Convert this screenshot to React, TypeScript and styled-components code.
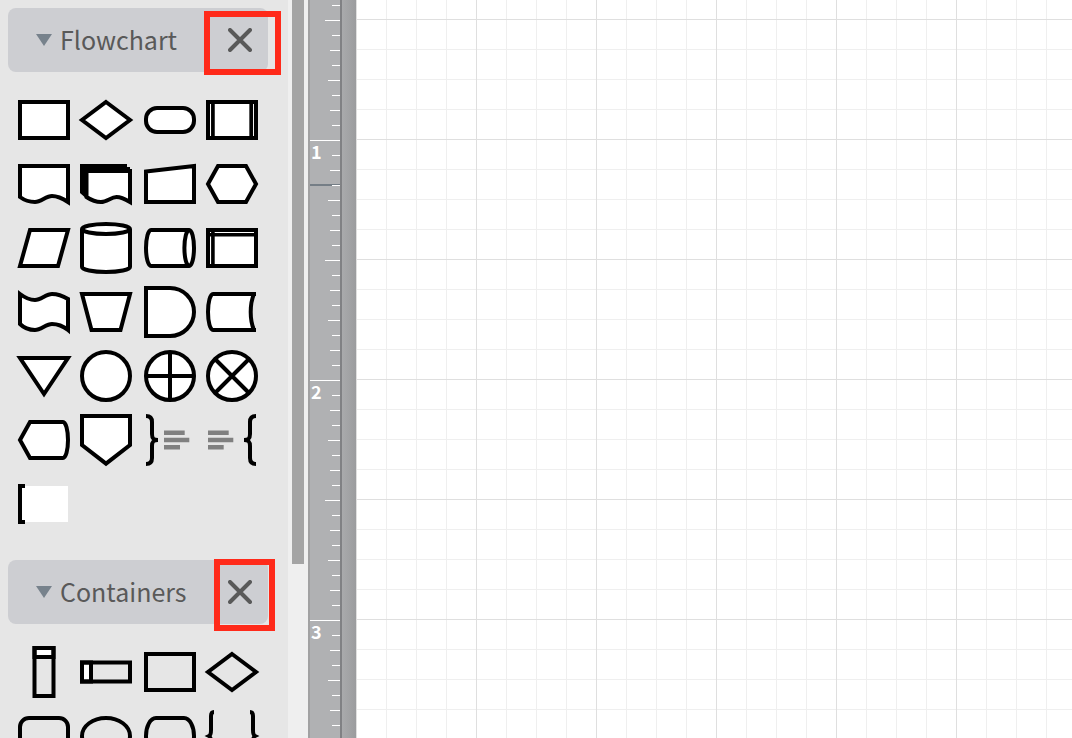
import React, { useEffect, useState } from "react";
import styled, { createGlobalStyle } from "styled-components";

const GlobalStyle = createGlobalStyle`
  *, *::before, *::after { box-sizing: border-box; }
  body {
    margin: 0;
    font-family: "Noto Sans CJK SC", "Noto Sans", sans-serif;
    color: #595959;
  }
  button {
    border: 0;
    padding: 0;
    background: none;
    font: inherit;
    color: inherit;
    cursor: pointer;
  }
`;

const Editor = styled.div`
  display: flex;
  height: 100vh;
  overflow: hidden;
`;

const Sidebar = styled.aside`
  flex: none;
  width: 288px;
  padding: 8px;
  background: #e6e6e6;
  overflow: hidden;
`;

const ScrollTrack = styled.div`
  flex: none;
  width: 20px;
  padding: 0 4px;
  background: #efefef;
`;

const ScrollThumb = styled.div`
  height: 564px;
  max-height: 100%;
  background: #a4a4a4;
`;

const Library = styled.section`
  margin-bottom: 24px;
`;

const LibraryHeader = styled.header`
  position: relative;
  display: flex;
  align-items: center;
  justify-content: space-between;
  width: 260px;
  height: 64px;
  padding: 0 16px 0 28px;
  border-radius: 8px;
  background: #cdced2;
`;

const LibraryToggle = styled.button`
  display: flex;
  align-items: center;
  gap: 8px;
  font-size: 25px;
  line-height: 32px;
`;

const LibraryTitle = styled.span`
  padding-bottom: 2px;
`;

const CloseButton = styled.button`
  display: flex;
  width: 24px;
  height: 24px;
`;

const Highlight = styled.div<{ $wide?: boolean }>`
  position: absolute;
  top: ${(p) => (p.$wide ? "3px" : "-1px")};
  left: ${(p) => (p.$wide ? "196px" : "206px")};
  width: ${(p) => (p.$wide ? "77px" : "61px")};
  height: ${(p) => (p.$wide ? "64px" : "72px")};
  border: 6px solid #ff2a1a;
  pointer-events: none;
`;

const ShapeGrid = styled.div`
  display: grid;
  grid-template-columns: 62px 64px 62px 52px;
  grid-auto-rows: 64px;
  padding: 16px 0 0 10px;
`;

const ShapeButton = styled.button`
  display: flex;
  align-items: center;
`;

const ShapeIcon = styled.svg`
  width: 52px;
  height: 52px;
  overflow: visible;
  stroke: #000;
  stroke-width: 4px;
  stroke-miterlimit: 10;
`;

const Ruler = styled.div`
  position: relative;
  flex: none;
  display: flex;
  flex-direction: column;
  align-items: flex-end;
  width: 34px;
  padding-top: 5px;
  border-left: 2px solid #a1a1a2;
  border-right: 2px solid #808184;
  background: #b0b1b3;
  overflow: hidden;
`;

const Tick = styled.div<{ $length: number }>`
  position: relative;
  flex: none;
  width: ${(p) => p.$length}px;
  height: 15px;
  padding-left: 1px;
  border-top: 1px solid #fff;
  color: #fff;
  font-size: 18px;
  font-weight: 700;
  line-height: 20px;
`;

const CursorMark = styled.div`
  position: absolute;
  top: 184px;
  left: 0;
  width: 100%;
  height: 2px;
  background: #757e86;
`;

const RulerShadow = styled.div`
  flex: none;
  width: 14px;
  background: linear-gradient(to right, #a9aaac, #9b9c9e);
`;

const Canvas = styled.main`
  flex: 1;
  min-width: 0;
  background-color: #fff;
  background-image:
    linear-gradient(to right, #dfdfdf 1px, transparent 1px),
    linear-gradient(to bottom, #dfdfdf 1px, transparent 1px),
    linear-gradient(to right, #efefef 1px, transparent 1px),
    linear-gradient(to bottom, #efefef 1px, transparent 1px);
  background-size: 120px 120px, 120px 120px, 30px 30px, 30px 30px;
  background-position: 0 19px;
`;

type Shape = { name: string; art: React.ReactNode };

const flowchartShapes: Shape[] = [
  { name: "Process", art: <rect x="2" y="8" width="48" height="36" /> },
  { name: "Decision", art: <path d="M26 8L50 26L26 44L2 26Z" /> },
  { name: "Terminator", art: <rect x="2" y="14" width="48" height="24" rx="11" /> },
  {
    name: "Predefined process",
    art: (
      <>
        <rect x="2" y="8" width="48" height="36" />
        <path d="M6.9 8V44M45.2 8V44" strokeWidth="3.7" />
      </>
    ),
  },
  {
    name: "Document",
    art: <path d="M2 8H50V44C44 40 39 38 34 38C28 38 23 44 17 44C11 44 6 42 2 39Z" />,
  },
  {
    name: "Multiple documents",
    art: (
      <>
        <path d="M0 6H47V9H50V12H52V20H8V42L0 35Z" fill="#000" stroke="none" />
        <path d="M6.5 13H50V44C45 41 41 39 36.5 39C31 39 27 44 21 44C15 44 11 42 6.5 39Z" />
      </>
    ),
  },
  { name: "Manual input", art: <path d="M2 13.5L50 8V44H2Z" /> },
  { name: "Preparation", art: <path d="M2 26L12 8H40L50 26L40 44H12Z" /> },
  { name: "Data", art: <path d="M12 8H50L40 44H2Z" /> },
  {
    name: "Database",
    art: (
      <>
        <path d="M2 7V45A24 5 0 0 0 50 45V7" />
        <ellipse cx="26" cy="7" rx="24" ry="5" />
      </>
    ),
  },
  {
    name: "Direct data",
    art: (
      <>
        <path d="M45.2 8H7A5 18 0 0 0 7 44H45.2" />
        <ellipse cx="45.2" cy="26" rx="4.8" ry="18" />
      </>
    ),
  },
  {
    name: "Internal storage",
    art: (
      <>
        <rect x="2" y="8" width="48" height="36" />
        <path d="M6.9 8V44M2 12.7H50" strokeWidth="3.6" />
      </>
    ),
  },
  {
    name: "Paper tape",
    art: (
      <path d="M2 8C6 11 12 14 17 14C23 14 28 8 34 8C39 8 45 10 50 13V44C45 40 39 38 34 38C28 38 23 44 17 44C12 44 6 42 2 38Z" />
    ),
  },
  { name: "Manual operation", art: <path d="M2 8H50L40.5 44H11.5Z" /> },
  { name: "Delay", art: <path d="M2 2H26A24 24 0 0 1 26 50H2Z" /> },
  {
    name: "Stored data",
    art: (
      <>
        <path d="M48 8H7A5 18 0 0 0 7 44H48C43.6 34 43.6 18 48 8Z" stroke="none" />
        <path d="M50 8H7A5 18 0 0 0 7 44H50M48 8C43.6 18 43.6 34 48 44" fill="none" />
      </>
    ),
  },
  { name: "Merge", art: <path d="M2 8H50L26 44Z" /> },
  { name: "Connector", art: <circle cx="26" cy="26" r="24" /> },
  {
    name: "Or",
    art: (
      <>
        <circle cx="26" cy="26" r="24" />
        <path d="M26 2V50M2 26H50" />
      </>
    ),
  },
  {
    name: "Summing junction",
    art: (
      <>
        <circle cx="26" cy="26" r="24" />
        <path d="M9 9L43 43M43 9L9 43" />
      </>
    ),
  },
  { name: "Display", art: <path d="M2 26L12 8H45A5 18 0 0 1 45 44H12Z" /> },
  { name: "Off-page link", art: <path d="M2 2H50V31L26 49.6L2 31Z" /> },
  {
    name: "Brace note right",
    art: (
      <>
        <path
          d="M2 2C6 2 8 4 8 8V20C8 24 9 26 14 26C9 26 8 28 8 32V44C8 48 6 50 2 50"
          fill="none"
        />
        <path d="M20 18.7H40.7M20 26H45.3M20 33.3H36" stroke="#808080" strokeWidth="4.6" />
      </>
    ),
  },
  {
    name: "Brace note left",
    art: (
      <>
        <path
          d="M50 2C46 2 44 4 44 8V20C44 24 43 26 38 26C43 26 44 28 44 32V44C44 48 46 50 50 50"
          fill="none"
        />
        <path d="M2 18.7H22.7M2 26H27.3M2 33.3H17.7" stroke="#808080" strokeWidth="4.6" />
      </>
    ),
  },
  {
    name: "Bracket note",
    art: (
      <>
        <rect x="2" y="8" width="48" height="36" stroke="none" />
        <path d="M7 8H2V44H7" />
      </>
    ),
  },
];

const containerShapes: Shape[] = [
  {
    name: "Vertical swimlane",
    art: (
      <>
        <rect x="16.5" y="2" width="19" height="9" />
        <rect x="16.5" y="2" width="19" height="48" fill="none" />
      </>
    ),
  },
  {
    name: "Horizontal swimlane",
    art: (
      <>
        <rect x="2" y="16.5" width="9" height="19" />
        <rect x="2" y="16.5" width="48" height="19" fill="none" />
      </>
    ),
  },
  {
    name: "Rectangle container",
    art: <rect x="2" y="8" width="48" height="36" fill="none" />,
  },
  { name: "Diamond container", art: <path d="M26 8L50 26L26 44L2 26Z" fill="none" /> },
  {
    name: "Rounded container",
    art: <rect x="2" y="8" width="48" height="36" rx="9" fill="none" />,
  },
  {
    name: "Ellipse container",
    art: <ellipse cx="26" cy="26" rx="24" ry="18" fill="none" />,
  },
  {
    name: "Barrel container",
    art: (
      <path
        d="M12 8H40C46 8 50 17 50 26C50 35 46 44 40 44H12C6 44 2 35 2 26C2 17 6 8 12 8Z"
        fill="none"
      />
    ),
  },
  {
    name: "Brace container",
    art: (
      <path
        d="M8 2C6 2 5 3 5 6V20C5 23 5 25 3 26C5 27 5 29 5 32V46C5 49 6 50 8 50M44 2C46 2 47 3 47 6V20C47 23 47 25 49 26C47 27 47 29 47 32V46C47 49 46 50 44 50"
        fill="none"
      />
    ),
  },
];

const TICK_SPACING = 15;
const FIRST_TICK = -9;

function tickLength(n: number) {
  if (n % 16 === 0) return 30;
  if (n % 8 === 0) return 15;
  if (n % 4 === 0) return 12;
  return n % 2 === 0 ? 10 : 8;
}

function useTicks() {
  const count = () => Math.ceil(window.innerHeight / TICK_SPACING);
  const [total, setTotal] = useState(count);
  useEffect(() => {
    const update = () => setTotal(count());
    window.addEventListener("resize", update);
    return () => window.removeEventListener("resize", update);
  }, []);
  return Array.from({ length: total }, (_, i) => i + FIRST_TICK);
}

function ShapeLibrary({ title, shapes, wide }: { title: string; shapes: Shape[]; wide?: boolean }) {
  return (
    <Library>
      <LibraryHeader>
        <LibraryToggle aria-expanded="true">
          <svg width="16" height="12" aria-hidden="true">
            <path d="M0 0H16L8 12Z" fill="#77828c" />
          </svg>
          <LibraryTitle>{title}</LibraryTitle>
        </LibraryToggle>
        <CloseButton aria-label={`Close ${title}`}>
          <svg width="24" height="24" aria-hidden="true">
            <path d="M2 2L22 22M22 2L2 22" stroke="#595959" strokeWidth="4" strokeLinecap="round" />
          </svg>
        </CloseButton>
        <Highlight $wide={wide} />
      </LibraryHeader>
      <ShapeGrid>
        {shapes.map((shape) => (
          <ShapeButton key={shape.name} aria-label={shape.name}>
            <ShapeIcon viewBox="0 0 52 52" fill="#fff" aria-hidden="true">
              {shape.art}
            </ShapeIcon>
          </ShapeButton>
        ))}
      </ShapeGrid>
    </Library>
  );
}

export default function App() {
  const ticks = useTicks();
  return (
    <>
      <GlobalStyle />
      <Editor>
        <Sidebar>
          <ShapeLibrary title="Flowchart" shapes={flowchartShapes} wide />
          <ShapeLibrary title="Containers" shapes={containerShapes} />
        </Sidebar>
        <ScrollTrack>
          <ScrollThumb />
        </ScrollTrack>
        <Ruler>
          <CursorMark />
          {ticks.map((n) => (
            <Tick key={n} $length={tickLength(n)}>
              {n % 16 === 0 ? n / 16 + 1 : null}
            </Tick>
          ))}
        </Ruler>
        <RulerShadow />
        <Canvas />
      </Editor>
    </>
  );
}
